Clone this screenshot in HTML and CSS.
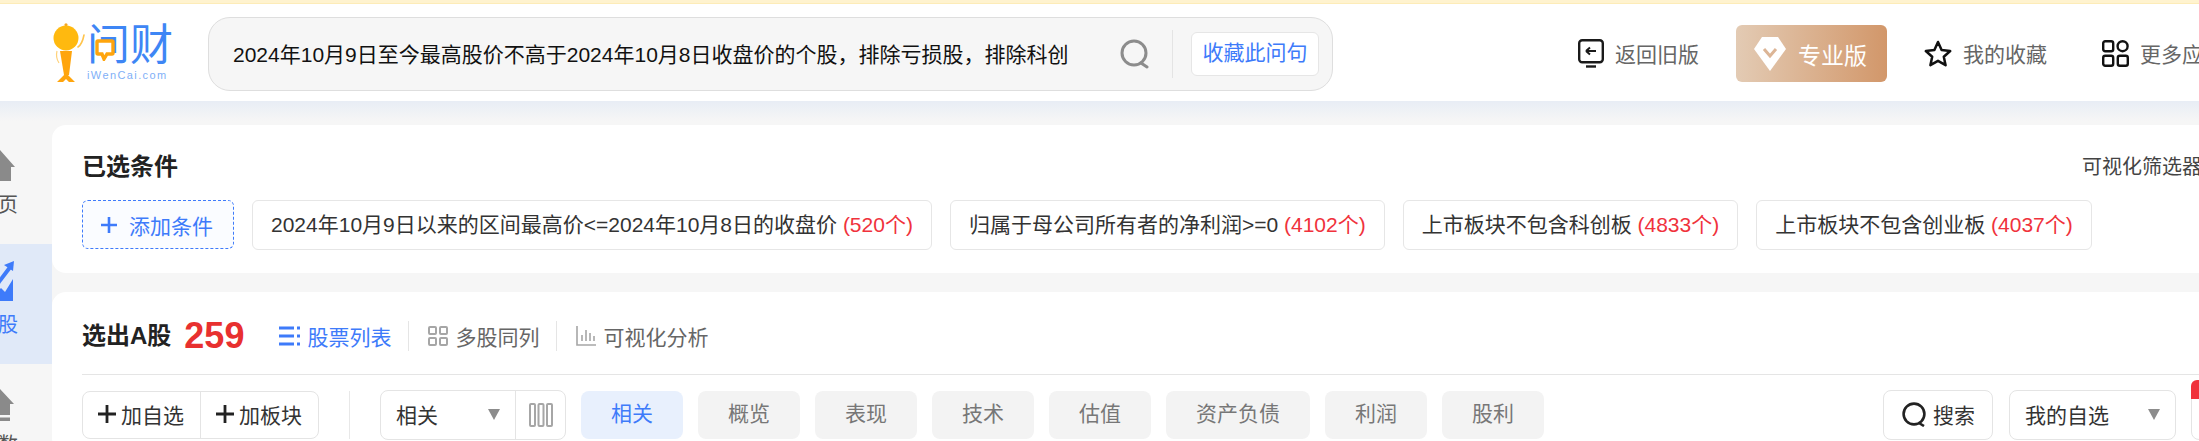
FILE: index.html
```html
<!DOCTYPE html>
<html lang="zh-CN">
<head>
    <meta charset="UTF-8">
    <title>问财选股</title>
    <link rel="stylesheet" href="styles.css">
</head>
<body>
    <div class="notice"></div>

    <header class="header">
        <a class="logo">
            <svg class="logo-man" width="33" height="60" viewBox="0 0 33 60">
                <circle cx="13" cy="1.8" r="1.6" fill="#f5a623"/>
                <circle cx="13" cy="15" r="12.5" fill="#ffb90f"/>
                <path d="M25 24c3-2 5-7 6-12" fill="none" stroke="#ffc44d" stroke-width="1.6" stroke-linecap="round"/>
                <path d="M7 28h12l-3 24h-5z" fill="#ffa50d"/>
                <path d="M4 28c-1 4 0 9 2 12" fill="none" stroke="#ffd27a" stroke-width="1.2"/>
                <path d="M13 50l-9 9h6l3-3 3 3h6z" fill="#ffa50d"/>
            </svg>
            <div class="logo-words">
                <div class="logo-cn">问财</div>
                <div class="logo-en">iWenCai.com</div>
                <svg class="logo-bubble" width="20" height="22" viewBox="0 0 20 22">
                    <path d="M3 2h14a1 1 0 0 1 1 1v11a1 1 0 0 1-1 1h-5l-3 5-2-5H3a1 1 0 0 1-1-1V3a1 1 0 0 1 1-1z" fill="#fff" stroke="#ffa50d" stroke-width="3.4"/>
                </svg>
            </div>
        </a>

        <div class="search">
            <div class="search-text">2024年10月9日至今最高股价不高于2024年10月8日收盘价的个股，排除亏损股，排除科创</div>
            <svg class="search-icon" width="30" height="30" viewBox="0 0 30 30">
                <circle cx="14" cy="14" r="12" fill="none" stroke="#8c8c8c" stroke-width="3"/>
                <path d="M21 24l6 4" stroke="#8c8c8c" stroke-width="3" stroke-linecap="round"/>
            </svg>
            <div class="search-line"></div>
            <div class="fav-btn">收藏此问句</div>
        </div>

        <nav class="nav">
            <div class="nav-item">
                <svg width="26" height="29" viewBox="0 0 26 29">
                    <rect x="1.2" y="1.2" width="23.6" height="22" rx="3" fill="none" stroke="#1a1a1a" stroke-width="2.4"/>
                    <path d="M8 12h10M8 12l4-3.5M8 12l4 3.5" fill="none" stroke="#1a1a1a" stroke-width="2"/>
                    <path d="M8 27.5h10" stroke="#1a1a1a" stroke-width="2.4"/>
                </svg>
                <span>返回旧版</span>
            </div>
            <div class="pro-btn">
                <svg width="34" height="36" viewBox="0 0 34 36">
                    <path d="M9 1h16l8 12-16 22L1 13z" fill="#fff"/>
                    <path d="M11 13l6 7 6-7" fill="none" stroke="#dcb596" stroke-width="3"/>
                </svg>
                <span>专业版</span>
            </div>
            <div class="nav-item">
                <svg width="28" height="27" viewBox="0 0 28 27">
                    <path d="M14 2l3.6 8 8.6 1-6.4 5.8 1.8 8.4-7.6-4.4-7.6 4.4 1.8-8.4L1.8 11l8.6-1z" fill="none" stroke="#111" stroke-width="2.5" stroke-linejoin="round"/>
                </svg>
                <span>我的收藏</span>
            </div>
            <div class="nav-item nav-more">
                <svg width="27" height="27" viewBox="0 0 27 27">
                    <rect x="1.2" y="1.2" width="10" height="10" rx="2" fill="none" stroke="#111" stroke-width="2.4"/>
                    <circle cx="20.6" cy="6.2" r="5" fill="none" stroke="#111" stroke-width="2.4"/>
                    <rect x="1.2" y="15.8" width="10" height="10" rx="2" fill="none" stroke="#111" stroke-width="2.4"/>
                    <rect x="15.8" y="15.8" width="10" height="10" rx="2" fill="none" stroke="#111" stroke-width="2.4"/>
                </svg>
                <span>更多应用</span>
            </div>
        </nav>
    </header>

    <div class="wrap">
        <aside class="side">
            <div class="side-item">
                <div class="side-icon">
                    <svg width="30" height="31" viewBox="0 0 30 31"><path d="M15 0l15 17h-4v14H4V17H0z" fill="#8a8a8a"/></svg>
                </div>
                <span>首页</span>
            </div>
            <div class="side-item active">
                <div class="side-icon">
                    <svg width="30" height="40" viewBox="0 0 30 40"><path d="M28 18v22H2l14-13 4 4z" fill="#3e7bfa"/><path d="M10 26L26 5" stroke="#3e7bfa" stroke-width="4"/><path d="M19 4l10-4-1 10z" fill="#3e7bfa"/></svg>
                </div>
                <span>选股</span>
            </div>
            <div class="side-item">
                <div class="side-icon">
                    <svg width="30" height="32" viewBox="0 0 30 32"><path d="M15 0l14 15h-4v11H5V15H1z" fill="#8a8a8a"/><path d="M5 28.5h20V32H5z" fill="#8a8a8a"/></svg>
                </div>
                <span>指数</span>
            </div>
        </aside>

        <main class="main">
            <section class="card card-cond">
                <div class="cond-head">
                    <h3 class="card-title">已选条件</h3>
                    <span class="cond-link">可视化筛选器</span>
                </div>
                <div class="cond-row">
                    <div class="add-btn">
                        <svg width="18" height="18" viewBox="0 0 18 18"><path d="M9 1v16M1 9h16" stroke="#3e7bfa" stroke-width="2.6"/></svg>
                        <span>添加条件</span>
                    </div>
                    <div class="chip">2024年10月9日以来的区间最高价&lt;=2024年10月8日的收盘价 <em>(520个)</em></div>
                    <div class="chip">归属于母公司所有者的净利润&gt;=0 <em>(4102个)</em></div>
                    <div class="chip">上市板块不包含科创板 <em>(4833个)</em></div>
                    <div class="chip">上市板块不包含创业板 <em>(4037个)</em></div>
                </div>
            </section>

            <section class="card card-result">
                <div class="result-head">
                    <h3 class="card-title">选出A股</h3>
                    <span class="result-num">259</span>
                    <div class="view-tab on">
                        <svg width="21" height="20" viewBox="0 0 21 20"><path d="M0 2h15M18 2h3M0 10h15M18 10h3M0 18h15M18 18h3" stroke="#3e7bfa" stroke-width="3"/></svg>
                        <span>股票列表</span>
                    </div>
                    <div class="view-tab">
                        <svg width="20" height="20" viewBox="0 0 20 20" fill="none" stroke="#a6a6a6" stroke-width="2"><rect x="1" y="1" width="7" height="7" rx="1"/><rect x="12" y="1" width="7" height="7" rx="1"/><rect x="1" y="12" width="7" height="7" rx="1"/><rect x="12" y="12" width="7" height="7" rx="1"/></svg>
                        <span>多股同列</span>
                    </div>
                    <div class="view-tab">
                        <svg width="20" height="20" viewBox="0 0 20 20" fill="none" stroke="#a6a6a6" stroke-width="1.6"><path d="M1 0v19h19M6 15V9M10 15V4M14 15V7M18 15v-5"/></svg>
                        <span>可视化分析</span>
                    </div>
                </div>

                <div class="toolbar">
                    <div class="btn-group">
                        <div class="group-btn">
                            <svg width="18" height="18" viewBox="0 0 18 18"><path d="M9 0v18M0 9h18" stroke="#222" stroke-width="2.8"/></svg>
                            <span>加自选</span>
                        </div>
                        <div class="group-btn">
                            <svg width="18" height="18" viewBox="0 0 18 18"><path d="M9 0v18M0 9h18" stroke="#222" stroke-width="2.8"/></svg>
                            <span>加板块</span>
                        </div>
                    </div>
                    <div class="tool-line"></div>
                    <div class="sort-box">
                        <div class="sort-main">
                            <span>相关</span>
                            <i class="arrow"></i>
                        </div>
                        <div class="sort-cols">
                            <svg width="24" height="24" viewBox="0 0 24 24" fill="none" stroke="#a6a6a6" stroke-width="2"><rect x="1" y="1" width="5" height="22" rx="1"/><rect x="9.5" y="1" width="5" height="22" rx="1"/><rect x="18" y="1" width="5" height="22" rx="1"/></svg>
                        </div>
                    </div>
                    <div class="cats">
                        <div class="cat on">相关</div>
                        <div class="cat">概览</div>
                        <div class="cat">表现</div>
                        <div class="cat">技术</div>
                        <div class="cat">估值</div>
                        <div class="cat">资产负债</div>
                        <div class="cat">利润</div>
                        <div class="cat">股利</div>
                    </div>
                    <div class="tools-right">
                        <div class="tool-btn">
                            <svg width="24" height="25" viewBox="0 0 24 25">
                                <circle cx="12" cy="12" r="10.4" fill="none" stroke="#222" stroke-width="2.6"/>
                                <path d="M17 21l5 3" stroke="#222" stroke-width="2.6"/>
                            </svg>
                            <span>搜索</span>
                        </div>
                        <div class="tool-btn my-list">
                            <span>我的自选</span>
                            <i class="arrow"></i>
                        </div>
                        <div class="tool-btn last-btn"><b class="red-tag"></b></div>
                    </div>
                </div>
            </section>
        </main>
    </div>
</body>
</html>
```

FILE: styles.css
```css
body {
    margin: 0;
    height: 441px;
    overflow: hidden;
    background: #f6f6f6;
    font-family: "Liberation Sans", "Noto Sans CJK SC", sans-serif;
    font-size: 21px;
    color: #333;
    white-space: nowrap;
}

.notice {
    height: 3px;
    background: #fff3cf;
    border-bottom: 1px solid #fdecb8;
}

/* header */
.header {
    display: flex;
    align-items: center;
    height: 97px;
    background: #fff;
    overflow: hidden;
}

.logo {
    display: flex;
    flex: none;
    align-items: center;
    gap: 1px;
    width: 208px;
    padding-left: 53px;
    box-sizing: border-box;
}

.logo-words {
    position: relative;
    width: 90px;
}

.logo-cn {
    font-size: 43px;
    line-height: 43px;
    color: #3e86f5;
}

.logo-en {
    font-size: 11px;
    line-height: 11px;
    margin-top: 3px;
    letter-spacing: 1.4px;
    color: #7fb0f7;
}

.logo-bubble {
    position: absolute;
    left: 8px;
    top: 15px;
}

.search {
    display: flex;
    flex: none;
    align-items: center;
    box-sizing: border-box;
    width: 1125px;
    height: 74px;
    margin-top: 3px;
    padding: 0 12px 0 24px;
    background: #f6f6f6;
    border: 1px solid #dedede;
    border-radius: 22px;
}

.search-text {
    width: 887px;
    padding-bottom: 3px;
    color: #111;
}

.search-icon {
    flex: none;
}

.search-line {
    width: 1px;
    height: 48px;
    margin: 0 18px 0 22px;
    background: #e4e4e4;
}

.fav-btn {
    width: 128px;
    height: 44px;
    line-height: 40px;
    box-sizing: border-box;
    text-align: center;
    color: #3e7bfa;
    background: #fff;
    border: 1px solid #e6e6e6;
    border-radius: 6px;
}

.nav {
    display: flex;
    flex: none;
    align-items: center;
    margin-left: 245px;
    margin-top: 2px;
}

.nav-item {
    display: flex;
    align-items: center;
    gap: 11px;
    color: #666;
}

.nav-item span {
    padding-bottom: 2px;
}

.nav-more {
    margin-left: 55px;
}

.pro-btn {
    display: flex;
    align-items: center;
    gap: 11px;
    width: 151px;
    height: 57px;
    margin: 0 37px;
    padding-left: 17px;
    box-sizing: border-box;
    font-size: 23px;
    color: #fff;
    background: linear-gradient(90deg, #e3cbb4, #d2976a);
    border-radius: 6px;
}

/* body */
.wrap {
    display: flex;
    height: 340px;
    overflow: hidden;
    background: linear-gradient(#e8edf5, #f6f6f6 20px);
}

.side {
    flex: none;
    width: 52px;
    padding-top: 23px;
}

.side-item {
    display: flex;
    flex-direction: column;
    align-items: flex-end;
    box-sizing: border-box;
    height: 120px;
    padding: 17px 34px 0 0;
    font-size: 20px;
    line-height: 24px;
    color: #555;
}

.side-item.active {
    background: #e0e9f8;
    color: #3e7bfa;
}

.side-icon {
    display: flex;
    align-items: flex-end;
    height: 40px;
    margin: 0 3px 12px 0;
}

.main {
    flex: none;
    width: 2170px;
    padding-top: 24px;
}

.card {
    background: #fff;
    border-radius: 14px 0 0 14px;
    padding-left: 30px;
}

.card-cond {
    height: 148px;
    box-sizing: border-box;
    padding-top: 30px;
    padding-right: 20px;
    margin-bottom: 19px;
}

.card-title {
    margin: 0;
    font-size: 24px;
    line-height: 24px;
    font-weight: bold;
    color: #222;
}

.cond-head {
    display: flex;
    justify-content: space-between;
    margin-bottom: 21px;
}

.cond-link {
    font-size: 20px;
    line-height: 24px;
    color: #444;
}

.cond-row {
    display: flex;
    gap: 18px;
}

.add-btn {
    display: flex;
    align-items: center;
    gap: 11px;
    box-sizing: border-box;
    width: 152px;
    height: 49px;
    padding-left: 17px;
    color: #3e7bfa;
    background: #fafcff;
    border: 1px dashed #3e7bfa;
    border-radius: 6px;
}

.chip {
    box-sizing: border-box;
    height: 50px;
    line-height: 48px;
    padding: 0 18px;
    border: 1px solid #e6e6e6;
    border-radius: 6px;
}

.chip em {
    font-style: normal;
    color: #f0323c;
}

.card-result {
    height: 160px;
}

.result-head {
    display: flex;
    align-items: center;
    height: 83px;
    padding-top: 20px;
    padding-bottom: 14px;
    box-sizing: border-box;
    border-bottom: 1px solid #e5e5e5;
}

.result-num {
    margin: 0 35px 0 13px;
    font-size: 36px;
    line-height: 40px;
    font-weight: bold;
    color: #e8302f;
}

.view-tab {
    display: flex;
    align-items: center;
    gap: 7px;
    height: 30px;
    color: #666;
    padding-right: 17px;
    margin-right: 19px;
    border-right: 1px solid #e5e5e5;
}

.view-tab:last-child {
    border-right: none;
}

.view-tab.on {
    color: #3e7bfa;
}

.toolbar {
    display: flex;
    align-items: center;
    height: 50px;
    margin-top: 15px;
}

.btn-group {
    display: flex;
    flex: none;
    box-sizing: border-box;
    width: 237px;
    height: 48px;
    border: 1px solid #e4e4e4;
    border-radius: 8px;
}

.group-btn {
    display: flex;
    flex: 1;
    align-items: center;
    gap: 5px;
    padding: 0 0 2px 15px;
    color: #333;
}

.group-btn + .group-btn {
    border-left: 1px solid #e4e4e4;
}

.tool-line {
    flex: none;
    width: 1px;
    height: 48px;
    margin: 0 30px;
    background: #e8e8e8;
}

.sort-box {
    display: flex;
    flex: none;
    box-sizing: border-box;
    width: 186px;
    height: 50px;
    border: 1px solid #e4e4e4;
    border-radius: 8px;
}

.sort-main {
    display: flex;
    flex: 1;
    align-items: center;
    justify-content: space-between;
    padding: 0 15px 2px;
}

.sort-cols {
    display: flex;
    align-items: center;
    justify-content: center;
    width: 49px;
    border-left: 1px solid #e4e4e4;
}

.arrow {
    width: 0;
    height: 0;
    border-left: 6px solid transparent;
    border-right: 6px solid transparent;
    border-top: 11px solid #8c8c8c;
}

.cats {
    display: flex;
    flex: none;
    gap: 15px;
    margin-left: 15px;
}

.cat {
    height: 48px;
    line-height: 46px;
    padding: 0 30px;
    text-align: center;
    color: #777;
    background: #f3f3f3;
    border-radius: 8px;
}

.cat.on {
    color: #3e7bfa;
    background: #e8f0fd;
}

.tools-right {
    display: flex;
    flex: none;
    gap: 16px;
    margin-left: 339px;
}

.tool-btn {
    display: flex;
    flex: none;
    align-items: center;
    gap: 7px;
    box-sizing: border-box;
    width: 110px;
    height: 50px;
    padding: 0 0 2px 18px;
    border: 1px solid #e4e4e4;
    border-radius: 8px;
}

.my-list {
    justify-content: space-between;
    width: 167px;
    padding: 0 15px 2px;
}

.last-btn {
    position: relative;
    margin-left: -1px;
}

.red-tag {
    position: absolute;
    left: -1px;
    top: -11px;
    width: 30px;
    height: 19px;
    background: #f0323c;
    border-radius: 6px 6px 0 0;
}
```
